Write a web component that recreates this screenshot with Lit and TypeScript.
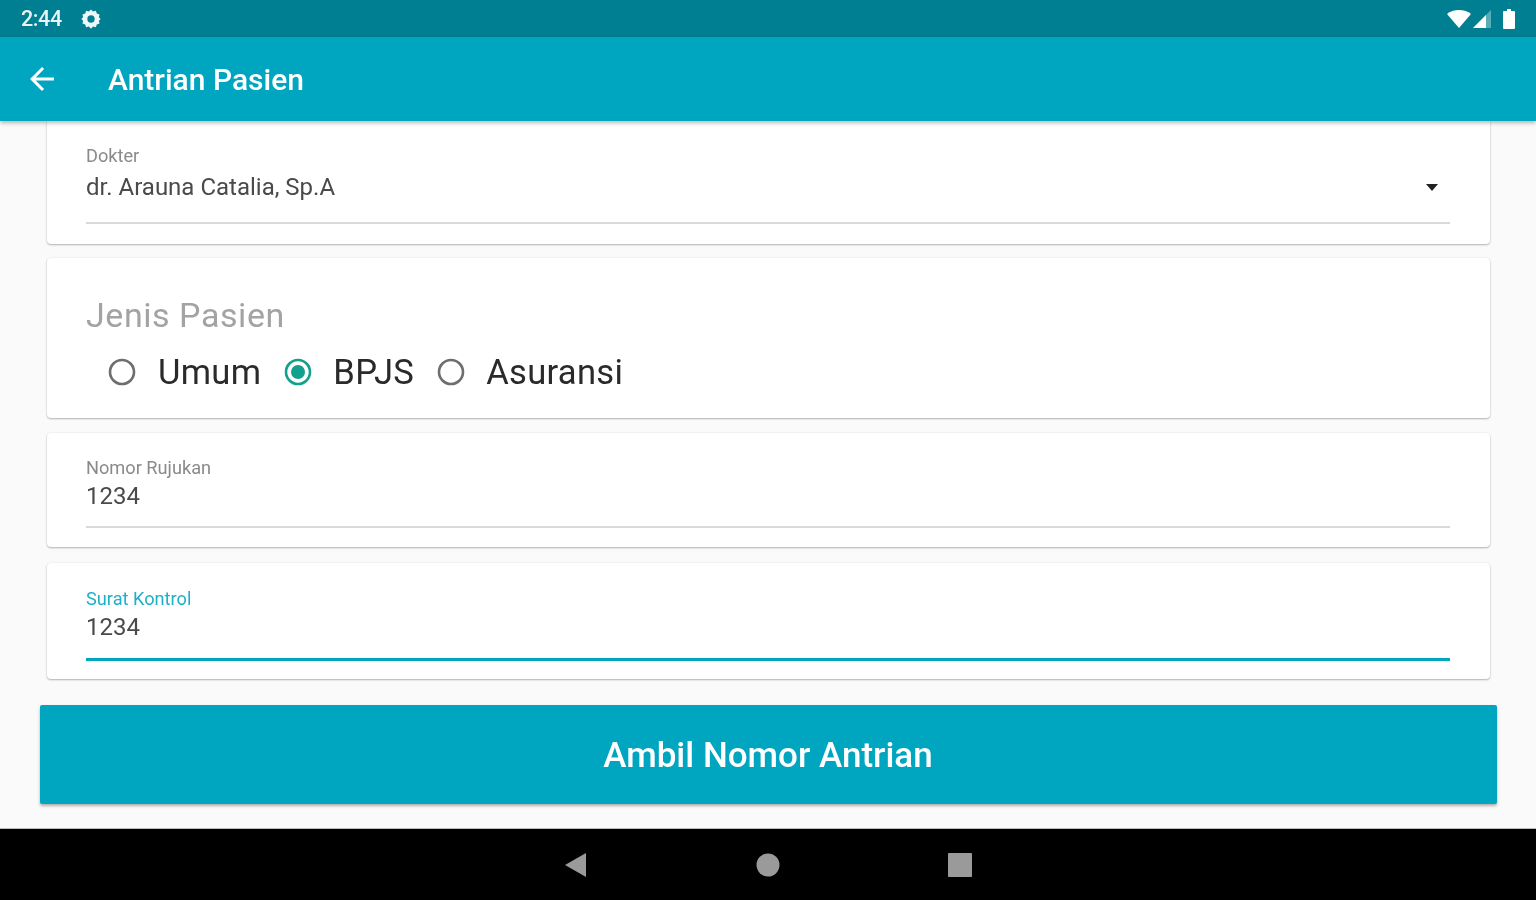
import { LitElement, html, css, svg } from "lit";
import { customElement } from "lit/decorators.js";

@customElement("app-root")
export class AppRoot extends LitElement {
  static styles = css`
    :host { display: flex; flex-direction: column; width: 1536px; height: 900px; overflow: hidden; background: #fafafa; font-family: Roboto, "Liberation Sans", sans-serif; filter: blur(0.55px); }
    .status { height: 37px; flex: none; background: #007f93; display: flex; align-items: center; padding: 0 21px 0 21px; color: #e8f4f6; }
    .time { font-size: 21.5px; font-weight: 500; letter-spacing: -0.4px; width: 59px; }
    .spacer { flex: 1; }
    .bar { height: 84px; flex: none; background: #00a5c0; display: flex; align-items: center; padding-left: 24px; color: #fff; position: relative; z-index: 2; box-shadow: 0 2px 4px rgba(0,0,0,.28); }
    .title { margin-left: 48px; font-size: 30px; font-weight: 500; letter-spacing: 0; }
    .content { flex: 1; display: flex; flex-direction: column; padding: 0 39px 0 40px; min-height: 0; }
    .cards { display: flex; flex-direction: column; padding: 0 7px; }
    .card { background: #fff; border-radius: 4px; box-shadow: 0 1px 2px rgba(0,0,0,.28), 0 0 2px rgba(0,0,0,.08); padding: 0 40px 0 39px; box-sizing: border-box; }
    .c1 { height: 123px; border-radius: 0 0 4px 4px; padding-top: 25px; margin-bottom: 14px; }
    .c2 { height: 160px; padding-top: 37px; margin-bottom: 15px; }
    .c3 { height: 114px; padding-top: 25px; margin-bottom: 16px; }
    .c4 { height: 116px; padding-top: 26px; }
    .label { font-size: 18.2px; line-height: 20px; color: #8a8a8a; letter-spacing: 0; }
    .label.on { color: #1fb0c8; }
    .value { font-size: 24px; line-height: 28px; color: #4a4a4a; }
    .c1 .value { margin-top: 5px; display: flex; justify-content: space-between; align-items: center; padding-right: 12px; height: 32px; }
    .c1 .line { margin-top: 19px; }
    .c3 .value { margin-top: 4px; height: 30px; }
    .c3 .line { margin-top: 14px; }
    .c4 .value { margin-top: 4px; height: 30px; }
    .c4 .line { margin-top: 15px; height: 3px; background: #00a5c0; }
    .line { height: 2px; background: #d9d9d9; }
    .heading { font-size: 34px; line-height: 40px; color: #a3a3a3; letter-spacing: 0.55px; }
    .radios { display: flex; align-items: center; margin-top: 17px; padding-left: 22px; font-size: 34.6px; color: #2a2a2a; line-height: 40px; letter-spacing: 0.3px; }
    .radio { display: flex; align-items: center; }
    .radio svg { margin-right: 22px; }
    .radio span { margin-right: 22.5px; }
    .radio.tight svg { margin-right: 21.5px; }
    .btn { margin-top: 26px; height: 99px; flex: none; background: #00a5c0; border-radius: 2px; box-shadow: 0 2px 3px rgba(0,0,0,.3); display: flex; align-items: center; justify-content: center; color: #fff; font-size: 35px; font-weight: 500; padding: 1px 1px 0 0; box-sizing: border-box; }
    .nav { height: 72px; flex: none; background: #000; display: flex; align-items: center; justify-content: center; gap: 168px; border-top: 1px solid #bbb; box-sizing: border-box; }
    svg { display: block; flex: none; }
  `;

  private radio(checked: boolean) {
    return checked
      ? svg`<svg width="28" height="28" viewBox="0 0 28 28"><circle cx="14" cy="14" r="12" fill="none" stroke="#12a08f" stroke-width="2.6"/><circle cx="14" cy="14" r="7" fill="#12a08f"/></svg>`
      : svg`<svg width="28" height="28" viewBox="0 0 28 28"><circle cx="14" cy="14" r="12" fill="none" stroke="#6e6e6e" stroke-width="2.6"/></svg>`;
  }

  render() {
    return html`
      <div class="status">
        <span class="time">2:44</span>
        <svg width="22" height="22" viewBox="0 0 24 24" fill="#eef7f8"><path fill-rule="evenodd" d="M12 1.500l2.200 2.300 3.100-.7 1 3 3 1-.7 3.100L22.500 12l-1.900 1.800.7 3.100-3 1-1 3-3.100-.7L12 22.500l-2.200-2.300-3.100.7-1-3-3-1 .7-3.100L1.500 12l1.900-1.800-.7-3.100 3-1 1-3 3.100.7zM12 8a4 4 0 1 0 0 8 4 4 0 0 0 0-8z"/></svg>
        <span class="spacer"></span>
        <svg width="24" height="18" viewBox="0 0 24 18" fill="#fff"><path d="M0 4C3.200 1.500 7.300 0 12 0s8.800 1.500 12 4L12 18z"/></svg>
        <svg style="margin-left:2px" width="18" height="18" viewBox="0 0 18 18" fill="#fff"><path d="M18 0v18H0z" opacity=".35"/><path d="M13 5v13H0z"/></svg>
        <svg style="margin-left:12px" width="12" height="20" viewBox="0 0 12 20" fill="#fff"><path d="M4 0h4v2h3a1 1 0 0 1 1 1v16a1 1 0 0 1-1 1H1a1 1 0 0 1-1-1V3a1 1 0 0 1 1-1h3z"/></svg>
      </div>
      <div class="bar">
        <svg width="36" height="36" viewBox="0 0 24 24" fill="#fff"><path d="M20 11H7.830l5.590-5.590L12 4l-8 8 8 8 1.410-1.410L7.830 13H20v-2z"/></svg>
        <span class="title">Antrian Pasien</span>
      </div>
      <div class="content">
        <div class="cards">
          <div class="card c1">
            <div class="label">Dokter</div>
            <div class="value">
              <span>dr. Arauna Catalia, Sp.A</span>
              <svg width="12" height="7" viewBox="0 0 12 7" fill="#222"><path d="M0 0h12L6 7z"/></svg>
            </div>
            <div class="line"></div>
          </div>
          <div class="card c2">
            <div class="heading">Jenis Pasien</div>
            <div class="radios">
              <div class="radio">${this.radio(false)}<span>Umum</span></div>
              <div class="radio tight">${this.radio(true)}<span>BPJS</span></div>
              <div class="radio tight">${this.radio(false)}<span>Asuransi</span></div>
            </div>
          </div>
          <div class="card c3">
            <div class="label">Nomor Rujukan</div>
            <div class="value">1234</div>
            <div class="line"></div>
          </div>
          <div class="card c4">
            <div class="label on">Surat Kontrol</div>
            <div class="value">1234</div>
            <div class="line"></div>
          </div>
        </div>
        <div class="btn">Ambil Nomor Antrian</div>
      </div>
      <div class="nav">
        <svg width="24" height="26" viewBox="0 0 24 26" fill="#9a9a9a"><path d="M22 1v24L1 13z"/></svg>
        <svg width="24" height="24" viewBox="0 0 24 24" fill="#9a9a9a"><circle cx="12" cy="12" r="11.500"/></svg>
        <svg width="24" height="24" viewBox="0 0 24 24" fill="#9a9a9a"><rect width="24" height="24" rx="1"/></svg>
      </div>
    `;
  }
}
